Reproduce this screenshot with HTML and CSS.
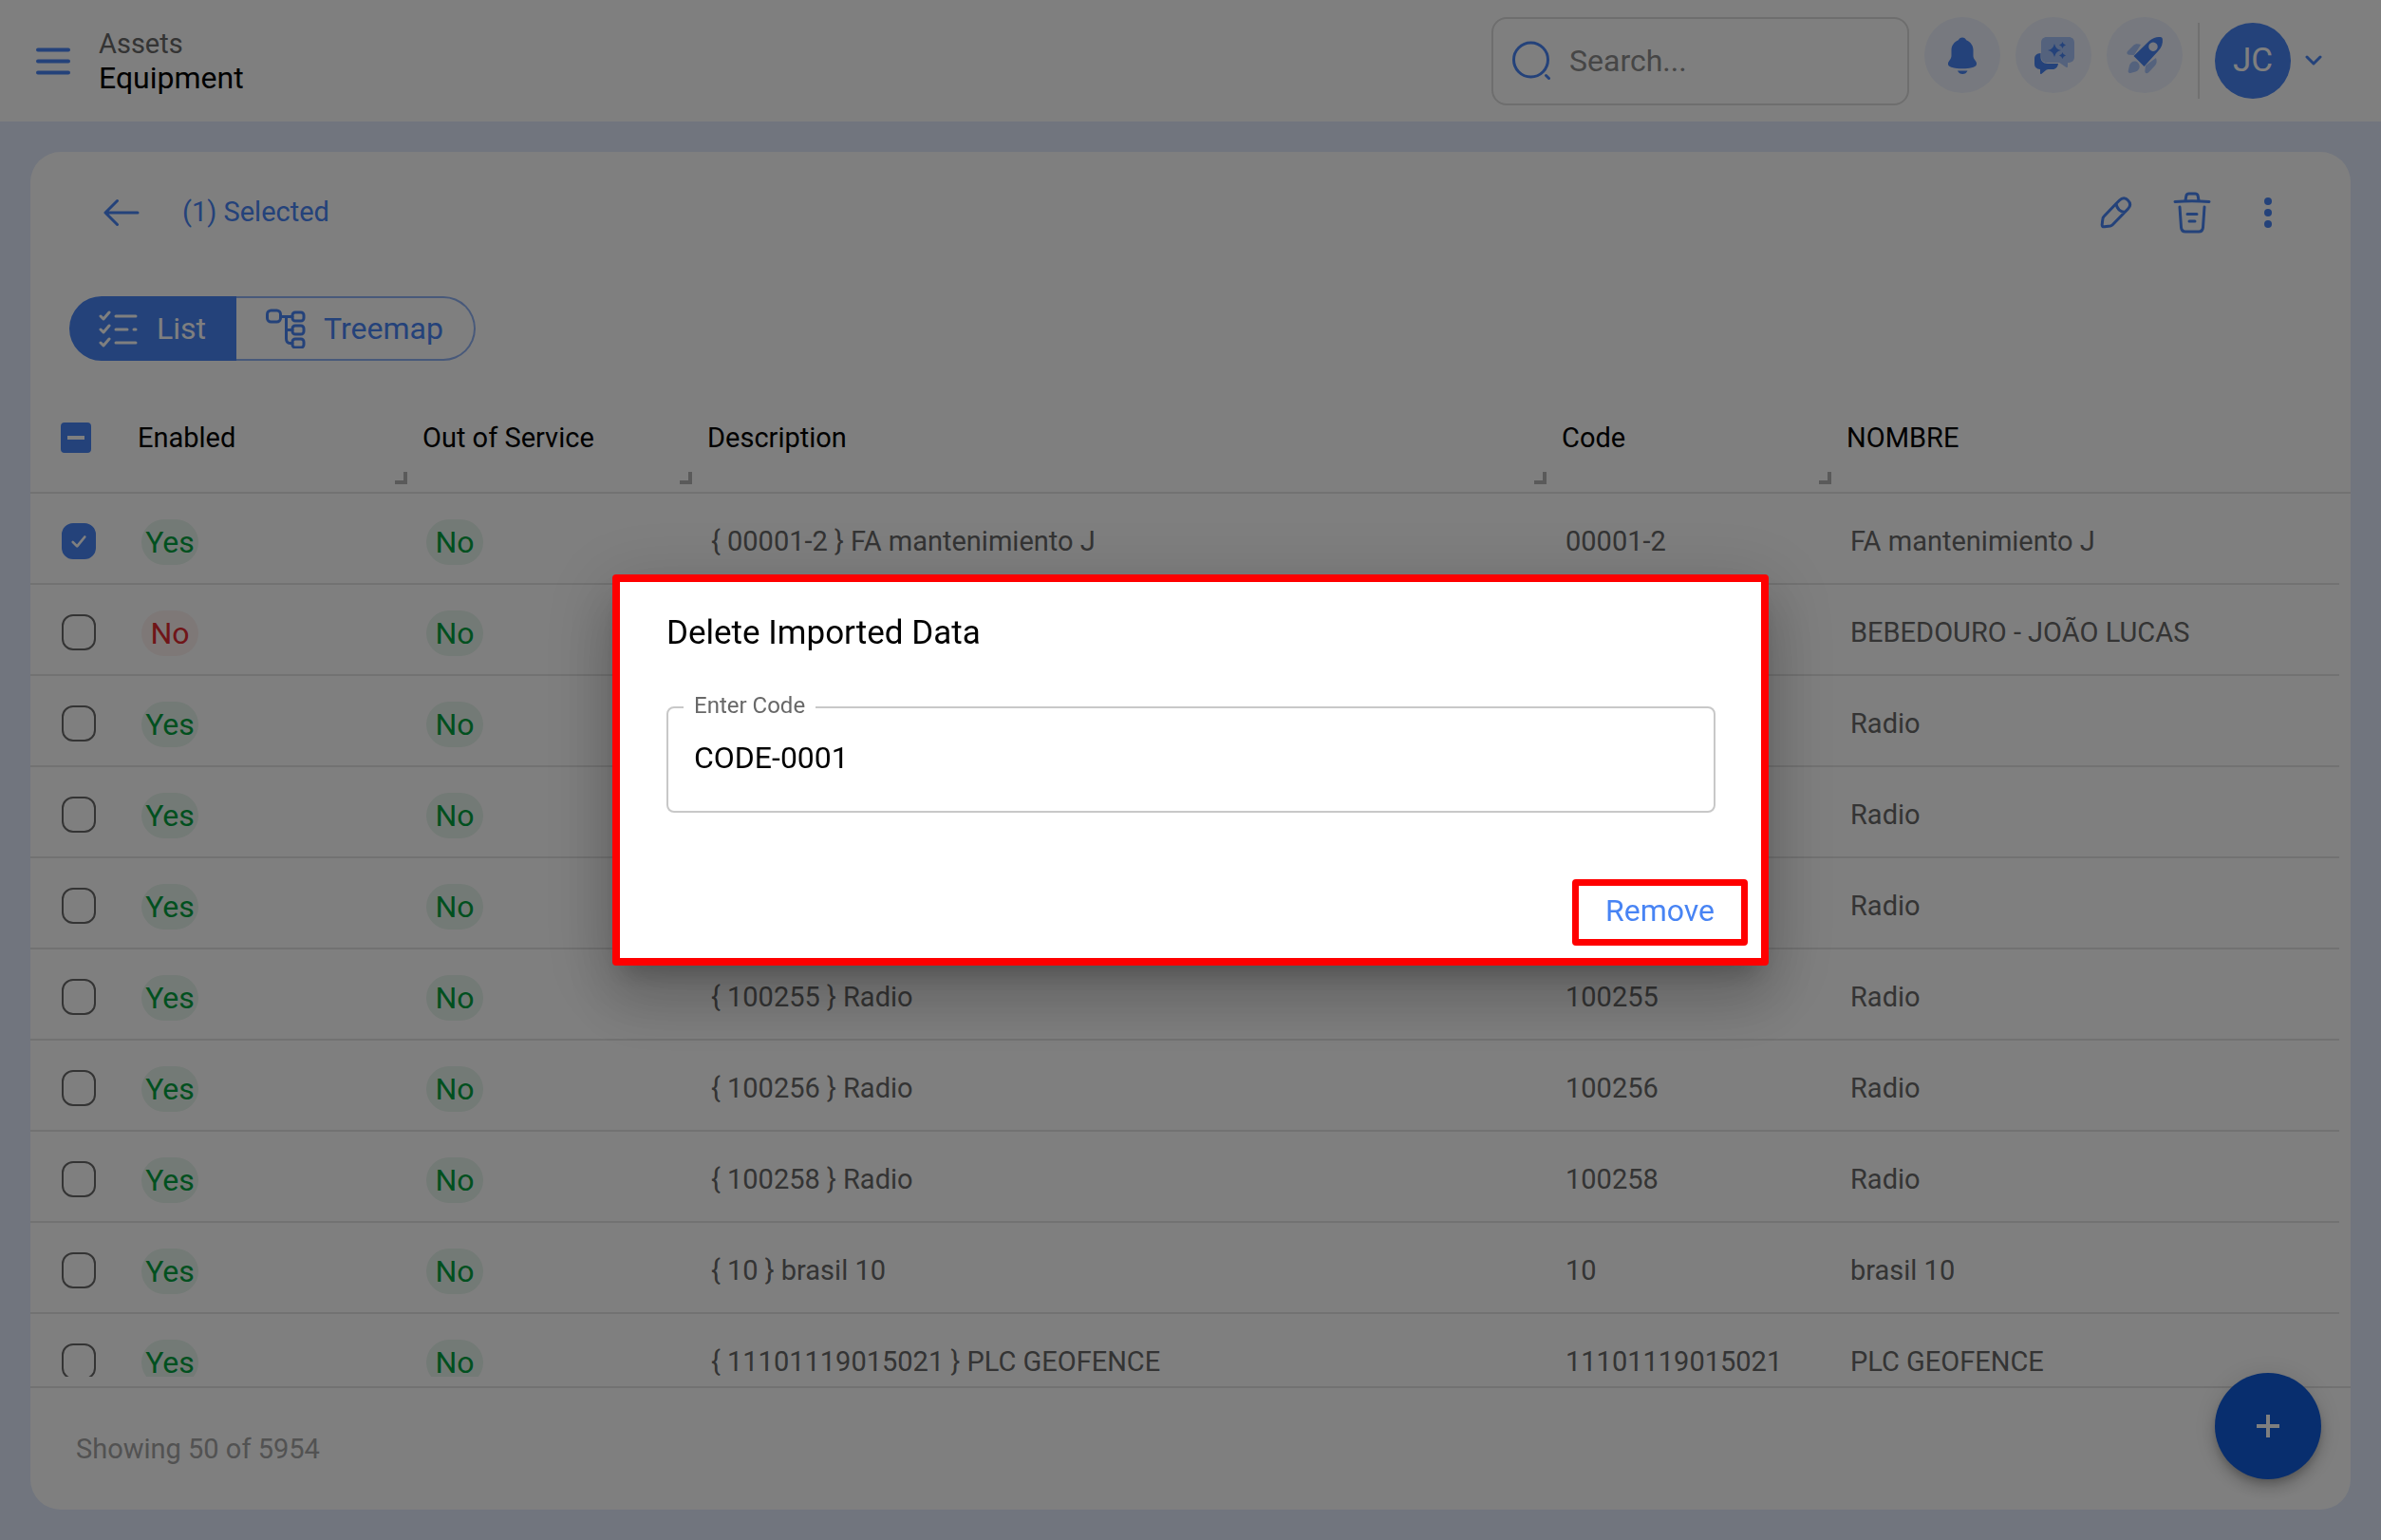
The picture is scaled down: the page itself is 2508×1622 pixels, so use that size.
FILE: index.html
```html
<!DOCTYPE html>
<html lang="en">
<head>
<meta charset="utf-8">
<meta name="viewport" content="width=device-width, initial-scale=1">
<title>Equipment</title>
<link rel="stylesheet" href="styles.css">
</head>
<body>
<div class="app">
  <header class="topbar">
    <button class="icon-btn menu-btn" type="button" aria-label="Menu">
      <svg width="36" height="30" viewBox="0 0 36 30" fill="none" stroke="currentColor" stroke-width="4" stroke-linecap="round"><path d="M2 3.500h32M2 15.500h32M2 27.500h32"/></svg>
    </button>
    <div class="crumbs">
      <span class="crumb-parent">Assets</span>
      <h1 class="crumb-page">Equipment</h1>
    </div>
    <label class="search">
      <svg width="40" height="42" viewBox="0 0 40 42" fill="none" stroke="currentColor" stroke-width="3" stroke-linecap="round"><circle cx="19.500" cy="20" r="18"/><path d="M35.500 36.500l3 3"/></svg>
      <input type="search" placeholder="Search..." aria-label="Search">
    </label>
    <div class="quick">
      <button class="round-btn" type="button" aria-label="Notifications">
        <svg width="40" height="40" viewBox="0 0 40 40" fill="currentColor"><path d="M20 1.500c-2 0-3.500 1.200-4.200 2.700C11.500 6 8.500 10 8.500 14.500v6c0 1.700-.5 3-1.600 4.500l-1 1.500c-2 3-.6 5.300 2.400 6.200 7.500 2.200 15.900 2.200 23.400 0 3-.9 4.400-3.200 2.400-6.200l-1-1.500c-1.100-1.500-1.600-2.800-1.600-4.500v-6c0-4.500-3-8.500-7.300-10.300C23.500 2.700 22 1.500 20 1.500z"/><path d="M15 36.500h10.500c-1 2.400-2.900 3.500-5.200 3.500S16 38.900 15 36.500z"/></svg>
      </button>
      <button class="round-btn" type="button" aria-label="Assistant">
        <svg width="44" height="40" viewBox="0 0 44 40" fill="currentColor"><path d="M8.500 18C4.500 18.200 2 20.500 2 24v5.500c0 3.300 2 5.200 6 5.500v4c0 1 1 1.400 1.800.6L14 36c1-.8 2-1 3.500-1h3.500c3.500 0 5.500-2.500 6-6H16c-5 0-7.500-3-7.500-7z"/><path class="soft" d="M15 1h23c3.700 0 6 2.300 6 6v15c0 3.700-2.300 6-7 6v4c0 1-1 1.300-1.800.7L29 28.500c-.6-.4-1-.5-2-.5H15c-3.700 0-6-2.300-6-6V7c0-3.700 2.300-6 6-6z"/><path d="M23 8q1.300 6 7 7-5.700 1-7 7-1.300-6-7-7 5.700-1 7-7zM31.500 6q.6 3 3.500 3.500-2.900.5-3.500 3.500-.6-3-3.500-3.500 2.900-.5 3.500-3.500zM31.500 17q.6 3 3.500 3.500-2.900.5-3.500 3.500-.6-3-3.500-3.500 2.900-.5 3.500-3.500z"/></svg>
      </button>
      <button class="round-btn" type="button" aria-label="What is new">
        <svg width="40" height="40" viewBox="0 0 40 40" fill="currentColor"><path class="soft" d="M16 9c-3-1-6-1-8 1l-5.500 5.500c-2 2-1.200 4 1.200 4.200L9 20zM32 23c1 3 1 6-1 8l-6.500 7c-2 2-4 1.500-4.200-1L21 31zM13 28c3.500 4 1 8.500-2.500 9.500L5 39c-1.500.3-2.500-.7-2.300-2.200L4 31c1-4 6-6 9-3z"/><path fill-rule="evenodd" d="M8.500 21L25 5c4-3.500 8-4.500 11.500-4 1.700.2 2.300.8 2.400 2.400.4 4-.9 8.300-4.400 12.100L19.500 32zM29 6.500a4.700 4.700 0 1 0 .01 0z"/></svg>
      </button>
    </div>
    <button class="account" type="button" aria-label="Account">
      <span class="avatar">JC</span>
      <svg width="18" height="12" viewBox="0 0 18 12" fill="none" stroke="currentColor" stroke-width="3" stroke-linecap="round" stroke-linejoin="round"><path d="M2 2l7 7 7-7"/></svg>
    </button>
  </header>

  <main class="content">
    <section class="card">
      <div class="actions">
        <button class="icon-btn" type="button" aria-label="Back">
          <svg width="38" height="30" viewBox="0 0 38 30" fill="none" stroke="currentColor" stroke-width="3" stroke-linecap="round" stroke-linejoin="round"><path d="M36 15H2M14.500 2.500L2 15l12.500 12.500"/></svg>
        </button>
        <span class="selected">(1) Selected</span>
        <div class="tools">
          <button class="icon-btn" type="button" aria-label="Edit">
            <svg width="34" height="34" viewBox="0 0 34 34" fill="none" stroke="currentColor" stroke-width="3" stroke-linecap="round" stroke-linejoin="round"><path d="M17 7.500l3.500-3.500c3-3 6.500-2.800 9 0 2.700 2.700 2.800 6 0 9L13.500 29.500c-.8.8-1.600 1.200-2.700 1.400l-6 .9c-2 .3-2.800-.6-2.600-2.500l.7-5.800c.1-1.100.6-1.900 1.400-2.700zM17 7.500c.8 5 4 8.300 9 9"/></svg>
          </button>
          <button class="icon-btn" type="button" aria-label="Delete">
            <svg width="40" height="44" viewBox="0 0 40 44" fill="none" stroke="currentColor" stroke-width="3" stroke-linecap="round" stroke-linejoin="round"><path d="M2 10.500q18-1.500 36 0M13 9l.8-4.500c.3-1.700 1-2.500 3-2.500h6.400c2 0 2.700.8 3 2.500L27 9M7 16l1.500 21.500c.3 3 1.500 4.500 4.500 4.500h14c3 0 4.200-1.500 4.500-4.500L33 16M15 23.500h10M17 31h6"/></svg>
          </button>
          <button class="icon-btn" type="button" aria-label="More">
            <svg width="10" height="34" viewBox="0 0 10 34" fill="currentColor"><circle cx="5" cy="5" r="4"/><circle cx="5" cy="17" r="4"/><circle cx="5" cy="29" r="4"/></svg>
          </button>
        </div>
      </div>

      <div class="views">
        <button class="view view-on" type="button">
          <svg width="42" height="40" viewBox="0 0 42 40" fill="none" stroke="currentColor" stroke-width="3" stroke-linecap="round" stroke-linejoin="round"><path d="M2 7l3 3 6-7M2 21l3 3 6-7M2 35l3 3 6-7M18 7h21M18 21h12M37 21h2M18 35h21"/></svg>
          List
        </button>
        <button class="view" type="button">
          <svg width="42" height="42" viewBox="0 0 42 42" fill="none" stroke="currentColor" stroke-width="3" stroke-linecap="round" stroke-linejoin="round"><rect x="1.500" y="2" width="14" height="12" rx="4"/><rect x="28" y="4" width="12" height="9" rx="3"/><rect x="28" y="18" width="12" height="9" rx="3"/><rect x="28" y="32" width="12" height="9" rx="3"/><path d="M16 8.500h12M21.500 8.500v23q0 5 4 5h2.500M21.500 22.500h6.500"/></svg>
          Treemap
        </button>
      </div>

      <div class="grid">
        <table>
          <colgroup><col class="c-check"><col class="c-std"><col class="c-std"><col class="c-wide"><col class="c-std"><col></colgroup>
          <thead>
            <tr>
              <th><input class="box box-all" type="checkbox" aria-label="Select all" checked></th>
              <th>Enabled<i class="grip"></i></th>
              <th>Out of Service<i class="grip"></i></th>
              <th>Description<i class="grip"></i></th>
              <th>Code<i class="grip"></i></th>
              <th>NOMBRE</th>
            </tr>
          </thead>
          <tbody>
            <tr><td><input class="box" type="checkbox" aria-label="Select 00001-2" checked></td><td class="flag"><span class="pill">Yes</span></td><td class="flag"><span class="pill">No</span></td><td>{ 00001-2 } FA mantenimiento J</td><td>00001-2</td><td>FA mantenimiento J</td></tr>
            <tr><td><input class="box" type="checkbox" aria-label="Select row"></td><td class="flag"><span class="pill pill-bad">No</span></td><td class="flag"><span class="pill">No</span></td><td></td><td></td><td>BEBEDOURO - JOÃO LUCAS</td></tr>
            <tr><td><input class="box" type="checkbox" aria-label="Select row"></td><td class="flag"><span class="pill">Yes</span></td><td class="flag"><span class="pill">No</span></td><td></td><td></td><td>Radio</td></tr>
            <tr><td><input class="box" type="checkbox" aria-label="Select row"></td><td class="flag"><span class="pill">Yes</span></td><td class="flag"><span class="pill">No</span></td><td></td><td></td><td>Radio</td></tr>
            <tr><td><input class="box" type="checkbox" aria-label="Select row"></td><td class="flag"><span class="pill">Yes</span></td><td class="flag"><span class="pill">No</span></td><td></td><td></td><td>Radio</td></tr>
            <tr><td><input class="box" type="checkbox" aria-label="Select 100255"></td><td class="flag"><span class="pill">Yes</span></td><td class="flag"><span class="pill">No</span></td><td>{ 100255 } Radio</td><td>100255</td><td>Radio</td></tr>
            <tr><td><input class="box" type="checkbox" aria-label="Select 100256"></td><td class="flag"><span class="pill">Yes</span></td><td class="flag"><span class="pill">No</span></td><td>{ 100256 } Radio</td><td>100256</td><td>Radio</td></tr>
            <tr><td><input class="box" type="checkbox" aria-label="Select 100258"></td><td class="flag"><span class="pill">Yes</span></td><td class="flag"><span class="pill">No</span></td><td>{ 100258 } Radio</td><td>100258</td><td>Radio</td></tr>
            <tr><td><input class="box" type="checkbox" aria-label="Select 10"></td><td class="flag"><span class="pill">Yes</span></td><td class="flag"><span class="pill">No</span></td><td>{ 10 } brasil 10</td><td>10</td><td>brasil 10</td></tr>
            <tr><td><input class="box" type="checkbox" aria-label="Select 11101119015021"></td><td class="flag"><span class="pill">Yes</span></td><td class="flag"><span class="pill">No</span></td><td>{ 11101119015021 } PLC GEOFENCE</td><td>11101119015021</td><td>PLC GEOFENCE</td></tr>
          </tbody>
        </table>
      </div>

      <footer class="summary">Showing 50 of 5954</footer>
    </section>
  </main>
  <button class="fab" type="button" aria-label="Add">
    <svg width="24" height="24" viewBox="0 0 24 24" fill="none" stroke="currentColor" stroke-width="4"><path d="M12 0v24M0 12h24"/></svg>
  </button>
</div>

<div class="overlay">
  <form class="modal" role="dialog" aria-modal="true" aria-labelledby="dlg-title">
    <h2 class="modal-title" id="dlg-title">Delete Imported Data</h2>
    <fieldset class="field">
      <legend><label for="code">Enter Code</label></legend>
      <input id="code" type="text" value="CODE-0001">
    </fieldset>
    <div class="modal-actions">
      <button class="remove" type="button">Remove</button>
    </div>
  </form>
</div>
</body>
</html>
```
FILE: styles.css
```css
:root {
  --blue: #4884f4;
  --line: #e4e4e4;
}

* { box-sizing: border-box; }

body {
  margin: 0;
  font-family: Roboto, sans-serif;
  font-size: 29px;
  line-height: 36px;
  color: #000;
}

button, input {
  font: inherit;
  color: inherit;
}

button {
  padding: 0;
  border: 0;
  background: none;
  cursor: pointer;
}

svg { display: block; flex: none; }

h1, h2 { margin: 0; font-weight: 400; }

.app {
  display: flex;
  flex-direction: column;
  height: 100vh;
  background: #e2eafc;
}

/* Top bar */
.topbar {
  display: flex;
  align-items: center;
  height: 128px;
  padding: 0 62px 0 38px;
  background: #fff;
}

.icon-btn { color: var(--blue); }

.crumbs {
  display: flex;
  flex-direction: column;
  margin-left: 30px;
  margin-right: auto;
}

.crumb-parent { color: #686868; }
.crumb-page { font-size: 32px; }

.search {
  display: flex;
  align-items: center;
  gap: 20px;
  width: 440px;
  height: 93px;
  padding: 0 20px;
  border: 2px solid #dcdcdc;
  border-radius: 16px;
  color: var(--blue);
}

.search input {
  flex: 1;
  min-width: 0;
  padding: 0;
  border: 0;
  outline: 0;
  background: none;
  font-size: 32px;
  color: #686868;
}

.search input::placeholder { color: #8c8c8c; opacity: 1; }

.quick {
  display: flex;
  gap: 16px;
  margin-left: 16px;
  padding: 0 16px 12px 0;
}

.round-btn {
  display: flex;
  align-items: center;
  justify-content: center;
  width: 80px;
  height: 80px;
  border-radius: 50%;
  background: #eef3ff;
  color: var(--blue);
}

.soft { fill: #a8c4fa; }

.account {
  display: flex;
  align-items: center;
  gap: 15px;
  padding-left: 16px;
  border-left: 2px solid #e0e0e0;
  color: var(--blue);
}

.avatar {
  width: 80px;
  height: 80px;
  border-radius: 50%;
  background: var(--blue);
  color: #fff;
  font-size: 35px;
  line-height: 80px;
  text-align: center;
}

/* Card */
.content {
  display: flex;
  flex: 1;
  min-height: 0;
  padding: 32px;
}

.card {
  display: flex;
  flex: 1;
  flex-direction: column;
  min-width: 0;
  border-radius: 32px;
  background: #fff;
  overflow: hidden;
}

.actions {
  display: flex;
  flex: none;
  align-items: center;
  height: 128px;
  padding: 0 82px 0 77px;
}

.selected {
  margin-left: 45px;
  padding-bottom: 2px;
  color: var(--blue);
}

.tools {
  display: flex;
  align-items: center;
  gap: 43px;
  margin-left: auto;
}

.tools .icon-btn:last-child { padding-left: 12px; }

.views {
  display: flex;
  flex: none;
  margin: 24px 0 24px 41px;
  font-size: 32px;
}

.view {
  display: flex;
  align-items: center;
  gap: 19px;
  height: 68px;
  padding: 0 32px 0 31px;
  border: 2px solid #90b2f4;
  border-left: 0;
  border-radius: 0 34px 34px 0;
  color: var(--blue);
}

.view-on {
  border: 0;
  border-radius: 34px 0 0 34px;
  background: var(--blue);
  color: #fff;
}

/* Table */
.grid {
  flex: 1;
  min-height: 0;
  overflow: hidden;
}

table {
  width: 100%;
  table-layout: fixed;
  border-collapse: separate;
  border-spacing: 0;
}

.c-check { width: 97px; }
.c-std { width: 300px; }
.c-wide { width: 900px; }

th {
  position: relative;
  height: 116px;
  padding: 0 0 0 16px;
  border-bottom: 2px solid var(--line);
  font-weight: 400;
  text-align: left;
}

td {
  height: 96px;
  padding: 4px 0 0 20px;
  background: linear-gradient(var(--line), var(--line)) left bottom / 100% 2px no-repeat;
  color: #686868;
  white-space: nowrap;
}

td:last-child { background-size: calc(100% - 12px) 2px; }

th:first-child { padding-left: 32px; }
td:first-child { padding-left: 33px; }

.grip {
  position: absolute;
  right: 0;
  bottom: 8px;
  width: 13px;
  height: 13px;
  border: solid #b4b4b4;
  border-width: 0 4px 4px 0;
}

.box {
  display: block;
  appearance: none;
  width: 36px;
  height: 38px;
  margin: 0;
  border: 2px solid #686868;
  border-radius: 12px;
  background: center / 18px 18px no-repeat;
}

.box:checked {
  border-color: var(--blue);
  background-color: var(--blue);
  background-image: url("data:image/svg+xml,%3Csvg xmlns='http://www.w3.org/2000/svg' viewBox='0 0 20 20' fill='none' stroke='white' stroke-width='3' stroke-linecap='round' stroke-linejoin='round'%3E%3Cpath d='M3 11l5 5 9-11'/%3E%3C/svg%3E");
}

.box.box-all {
  width: 32px;
  height: 32px;
  border-radius: 4px;
  background-image: linear-gradient(#fff, #fff);
  background-size: 18px 4px;
}

td.flag { padding-top: 6px; }

.pill {
  display: inline-block;
  min-width: 60px;
  height: 48px;
  padding: 0 4px;
  border-radius: 24px;
  background: #e6f4ec;
  color: #00a03e;
  font-size: 32px;
  line-height: 48px;
  text-align: center;
}

.pill-bad {
  background: #fcf0ef;
  color: #e02a30;
}

.summary {
  display: flex;
  flex: none;
  align-items: center;
  height: 130px;
  margin-top: 10px;
  padding-left: 48px;
  border-top: 2px solid var(--line);
  color: #a4a4a4;
}

.fab {
  position: fixed;
  right: 63px;
  bottom: 64px;
  display: flex;
  align-items: center;
  justify-content: center;
  width: 112px;
  height: 112px;
  border-radius: 50%;
  background: #105cdc;
  box-shadow: 0 5px 8px -2px rgba(0, 0, 0, .2), 0 10px 16px rgba(0, 0, 0, .14), 0 2px 29px rgba(0, 0, 0, .12);
  color: #fff;
}

/* Dialog */
.overlay {
  position: fixed;
  inset: 0;
  display: flex;
  align-items: center;
  justify-content: center;
  background: rgba(0, 0, 0, .5);
}

.modal {
  width: 100%;
  max-width: 1218px;
  padding: 34px 14px 13px 49px;
  border: 8px solid #f00;
  border-radius: 4px;
  background: #fff;
  box-shadow: 0 18px 24px -11px rgba(0, 0, 0, .2), 0 38px 61px 5px rgba(0, 0, 0, .14), 0 14px 74px 13px rgba(0, 0, 0, .12);
}

.modal-title {
  font-size: 35px;
  line-height: 40px;
}

.field {
  height: 127px;
  margin: 42px 34px 70px 0;
  padding: 0 27px;
  border: 2px solid #c8c8c8;
  border-radius: 8px;
}

.field legend {
  margin-left: -11px;
  padding: 0 11px 4px;
  color: #686868;
  font-size: 24px;
  line-height: 28px;
}

.field input {
  width: 100%;
  height: 74px;
  padding: 0;
  border: 0;
  outline: 0;
  background: none;
  font-size: 32px;
}

.modal-actions {
  display: flex;
  justify-content: flex-end;
}

.remove {
  height: 70px;
  padding: 0 28px 4px;
  border: 7px solid #f00;
  border-radius: 4px;
  color: var(--blue);
  font-size: 32px;
}
```
